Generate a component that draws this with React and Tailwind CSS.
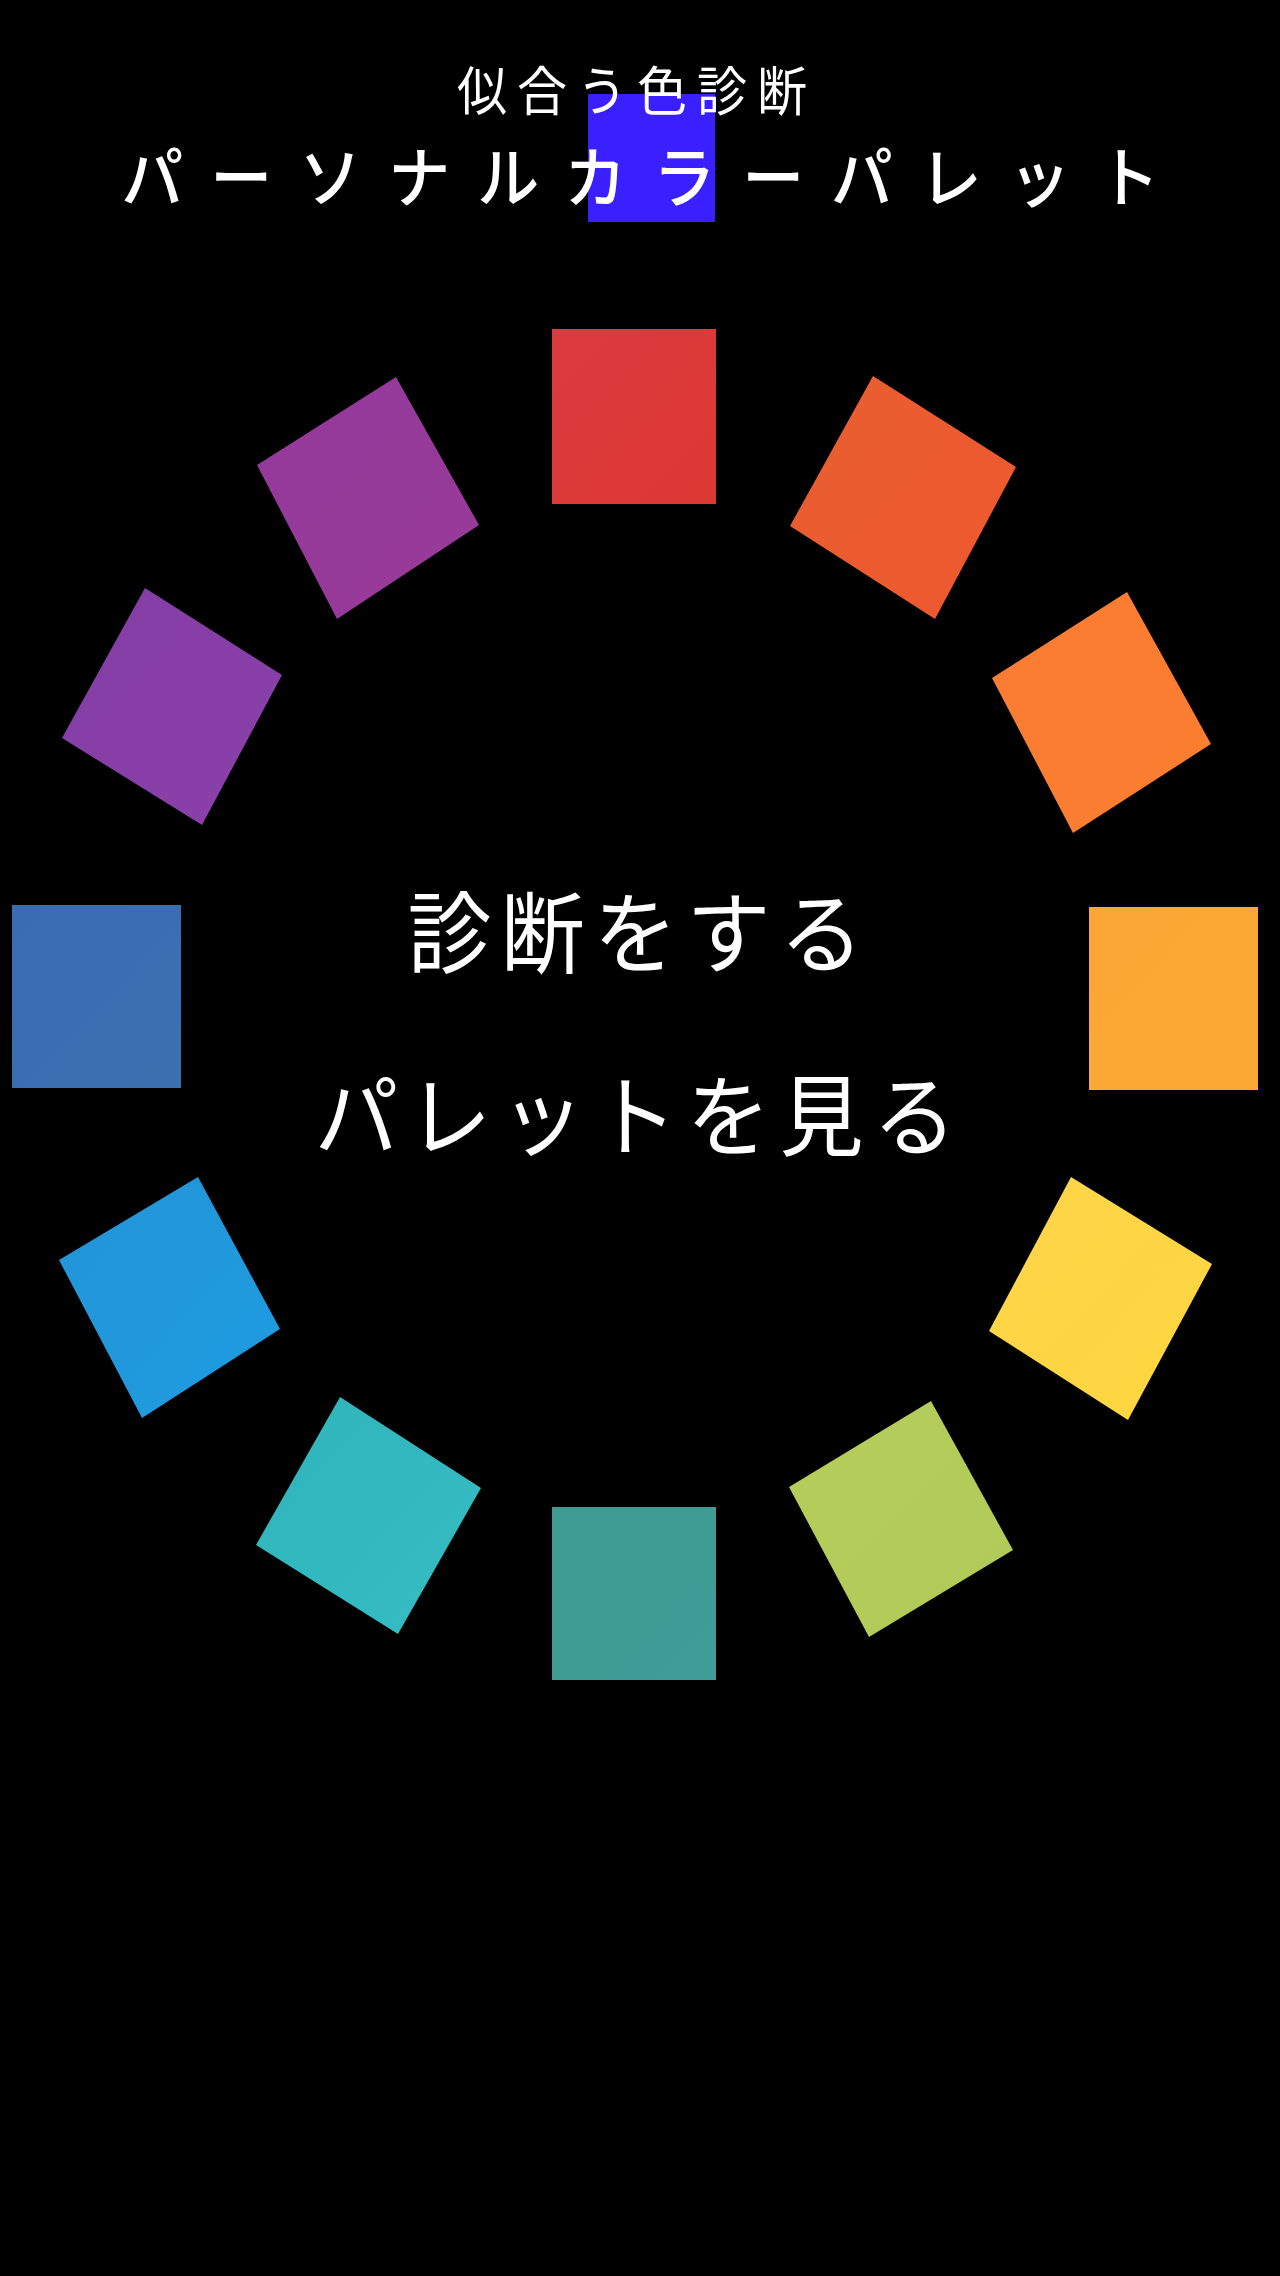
import React from "react";

const swatches = [
  { points: "552,329 716,329 716,504 552,504", from: "#dc3a40", to: "#dc3833" },
  { points: "873,376 1016,467 935,619 790,526", from: "#e85f30", to: "#ef5830" },
  { points: "1127,592 1211,744 1073,833 992,678", from: "#f97c33", to: "#fb7e30" },
  { points: "1089,907 1258,907 1258,1090 1089,1090", from: "#fba735", to: "#fca834" },
  { points: "1071,1177 1212,1264 1128,1420 989,1331", from: "#fdd54a", to: "#fdd63f" },
  { points: "931,1401 1013,1550 869,1637 789,1487", from: "#b6cd5a", to: "#b0ca58" },
  { points: "552,1507 716,1507 716,1680 552,1680", from: "#3e9c94", to: "#409c96" },
  { points: "340,1397 481,1488 398,1634 256,1545", from: "#2fb4ba", to: "#36bcc4" },
  { points: "198,1177 280,1329 142,1418 59,1260", from: "#2394d8", to: "#1f9ce0" },
  { points: "12,905 181,905 181,1088 12,1088", from: "#3a6cb4", to: "#3a70b0" },
  { points: "145,588 282,675 202,825 62,738", from: "#843ea6", to: "#8a40a8" },
  { points: "396,377 479,525 337,619 257,465", from: "#943a9c", to: "#983a98" },
];

const jp = "font-['Noto_Sans_CJK_JP',sans-serif] text-white blur-[0.6px]";

export default function App() {
  return (
    <div className="relative h-[2276px] w-[1280px] overflow-hidden bg-black">
      <div className="absolute left-[588px] top-[94px] h-[128px] w-[127px] bg-[#3a1fff]" />

      <svg className="absolute inset-0" width="1280" height="2276" viewBox="0 0 1280 2276">
        <defs>
          {swatches.map((s, i) => (
            <linearGradient key={i} id={`swatch-${i}`} x1="0" y1="0" x2="1" y2="1">
              <stop offset="0%" stopColor={s.from} />
              <stop offset="100%" stopColor={s.to} />
            </linearGradient>
          ))}
        </defs>
        {swatches.map((s, i) => (
          <polygon key={i} points={s.points} fill={`url(#swatch-${i})`} />
        ))}
      </svg>

      <div className="relative flex flex-col items-center">
        <h2 className={`${jp} font-normal mt-[57px] ml-[-6px] scale-y-[1.06] text-[50px] leading-[62px] tracking-[10px]`}>
          似合う色診断
        </h2>
        <h1 className={`${jp} font-medium mt-[15px] ml-[28px] scale-y-[1.06] text-[62px] leading-[78px] tracking-[27px] whitespace-nowrap`}>
          パーソナルカラーパレット
        </h1>

        <div className="mt-[662px] flex flex-col items-center gap-[75px]">
          <button className={`${jp} font-normal scale-y-[1.06] text-[84px] leading-[108px] tracking-[9px]`}>
            診断をする
          </button>
          <button className={`${jp} font-normal scale-y-[1.06] text-[84px] leading-[108px] tracking-[9px] whitespace-nowrap`}>
            パレットを見る
          </button>
        </div>
      </div>
    </div>
  );
}
